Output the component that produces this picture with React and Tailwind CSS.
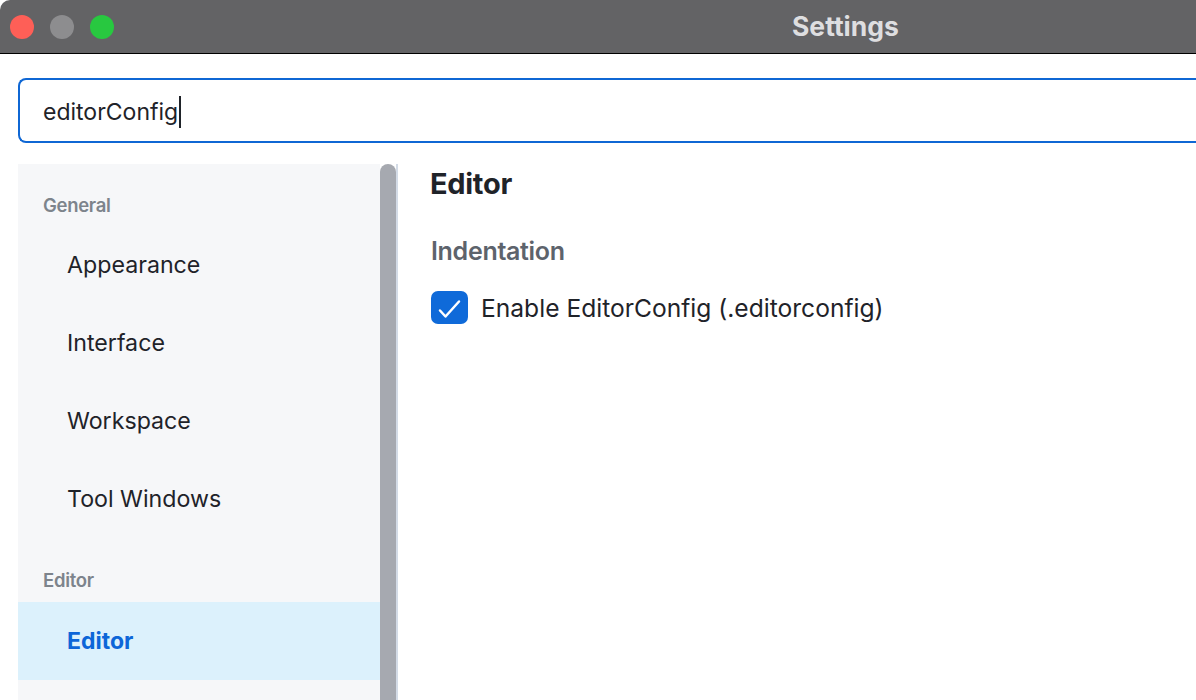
export default function App() {
  const items = ["Appearance", "Interface", "Workspace", "Tool Windows"];
  return (
    <div className="w-[1196px] h-[700px] overflow-hidden bg-white flex flex-col" style={{ fontFamily: "Inter, 'Noto Sans', sans-serif" }}>
      <div className="h-[54px] shrink-0 bg-[#636365] border-b border-black flex items-center rounded-tl-[10px]">
        <div className="flex items-center gap-[16px] pl-[10px]">
          <div className="w-6 h-6 rounded-full bg-[#fe5f57]" />
          <div className="w-6 h-6 rounded-full bg-[#8d8d8f]" />
          <div className="w-6 h-6 rounded-full bg-[#28c840]" />
        </div>
        <div className="ml-[678px] text-[26.5px] font-bold text-[#dedee0] leading-none">Settings</div>
      </div>
      <div className="mt-[24px] ml-[18px] h-[65px] shrink-0 border-2 border-r-0 border-[#0f67d4] rounded-l-[8px] flex items-center pl-[23px] pt-[3px]">
        <span className="text-[23px] text-[#1f2329] leading-none">editorConfig</span>
        <span className="w-[2px] h-[32px] bg-[#1f2329] ml-[1px]" />
      </div>
      <div className="mt-[21px] flex flex-1 min-h-0">
        <div className="ml-[18px] w-[362px] bg-[#f6f7f9] flex flex-col">
          <div className="pt-[30px] pl-[25px] h-[52px] text-[18.5px] leading-[22px] font-semibold text-[#7d848c] tracking-[-0.3px]">General</div>
          <div className="h-[10px]" />
          {items.map((t) => (
            <div key={t} className="h-[78px] flex items-center pl-[49px] text-[23.2px] text-[#1f2329]">{t}</div>
          ))}
          <div className="pt-[31px] pl-[25px] h-[64px] text-[18.5px] leading-[22px] font-semibold text-[#7d848c] tracking-[-0.3px]">Editor</div>
          <div className="h-[78px] flex items-center pl-[49px] text-[23px] font-bold text-[#0d66d8] bg-[#dcf1fc]">Editor</div>
        </div>
        <div className="w-[16px] bg-[#a6a9b0] rounded-t-full" />
        <div className="w-[2px] bg-[#d3dbe6]" />
        <div className="pl-[32px] flex flex-col">
          <div className="pt-[4px] text-[29px] leading-[32px] font-bold text-[#1f2329] tracking-[-0.3px]">Editor</div>
          <div className="mt-[37px] text-[25px] leading-[28px] font-semibold text-[#5d636c] tracking-[-0.3px] pl-[1px]">Indentation</div>
          <div className="mt-[26px] flex items-center pl-[1px]">
            <svg width="37" height="33" viewBox="0 0 37 33" fill="none" className="shrink-0">
              <rect x="0" y="0" width="37" height="33" rx="7" fill="#0f6ad9" />
              <path d="M9 19.5 L14.5 25.5 L28 10.5" stroke="white" strokeWidth="2.5" strokeLinecap="round" strokeLinejoin="round" />
            </svg>
            <span className="ml-[13px] text-[24.6px] leading-[30px] text-[#1f2329]">Enable EditorConfig (.editorconfig)</span>
          </div>
        </div>
      </div>
    </div>
  );
}
